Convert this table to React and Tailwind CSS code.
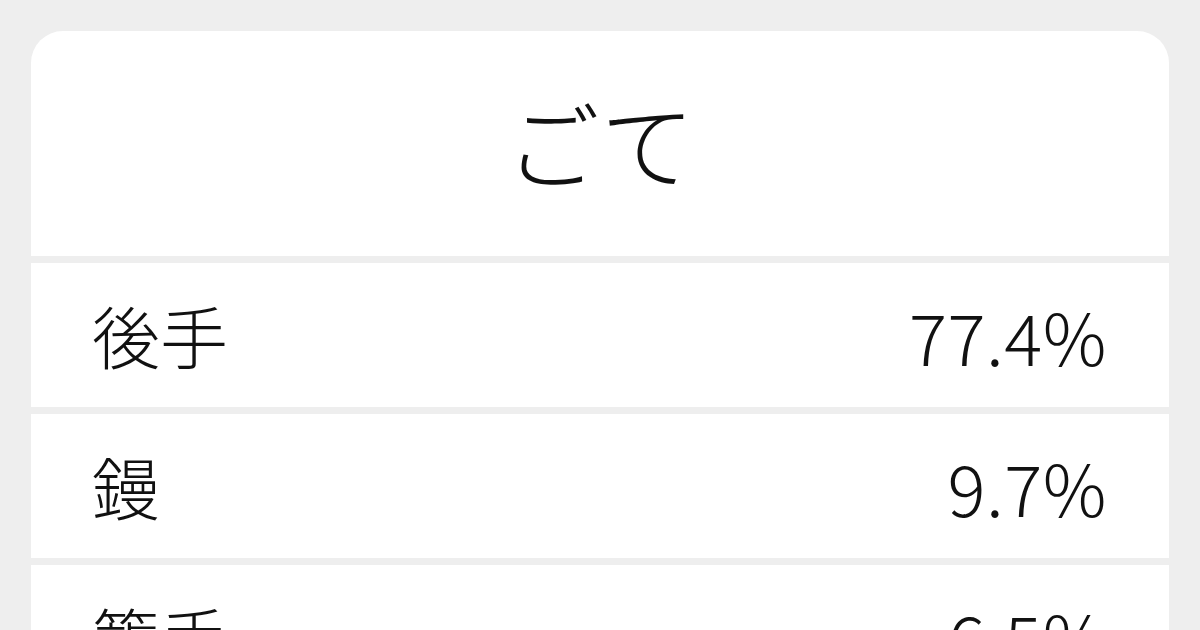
export default function App() {
  const rows = [
    { label: '後手', value: '77.4%' },
    { label: '鏝', value: '9.7%' },
    { label: '籠手', value: '6.5%' },
  ];

  return (
    <div className="w-[1200px] h-[630px] overflow-hidden bg-[#eeeeee] pt-[31px] px-[31px] text-[#111111] font-['Noto_Sans_CJK_JP_Light','Noto_Sans_CJK_JP_DemiLight','Noto_Sans_CJK_JP',sans-serif] font-light">
      <div className="flex flex-col gap-[7px] rounded-t-[32px] overflow-hidden">
        <div className="h-[225px] bg-white flex items-center justify-center">
          <span className="text-[94px] leading-none -mt-[6px]">ごて</span>
        </div>
        {rows.map(r => (
          <div key={r.label} className="h-[144px] shrink-0 bg-white flex items-center justify-between pl-[61px] pr-[62px]">
            <span className="text-[68px] leading-none">{r.label}</span>
            <span className="text-[71px] leading-none tracking-[0.5px]">{r.value}</span>
          </div>
        ))}
      </div>
    </div>
  );
}
